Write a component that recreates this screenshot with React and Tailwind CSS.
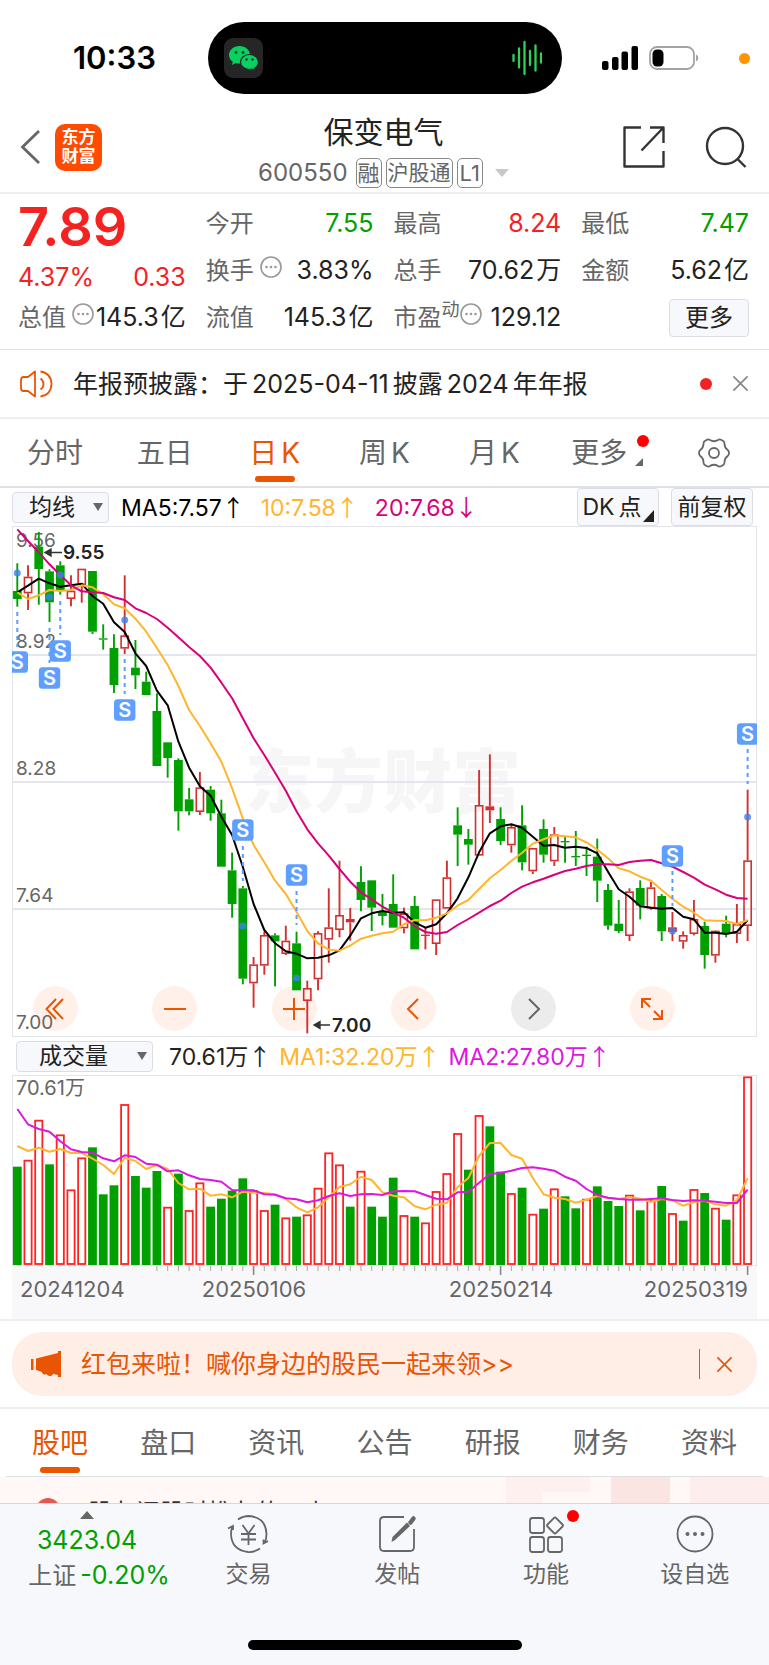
import React from "react";

const UP = "#d32f2f";
const DOWN = "#00a000";
const ORANGE = "#ea5504";

const STEP = 10.74;
const px = (i) => 5.3 + STEP * i;

// Readings are kept in thirds of a unit, grouped by the base that they start from.
const group = (base, rows) => rows.map((r) => (Array.isArray(r) ? [r[0], ...r.slice(1).map((v) => (v + base) / 3)] : (r + base) / 3));

// [direction, high, body top, body bottom, low]
const candles = [
  ...group(-18, [
    ["d", 130, 213, 237, 260], ["u", 136, 170, 220, 270], ["d", 36, 80, 147, 254], ["d", 148, 154, 247, 306],
    ["d", 124, 136, 210, 224], ["u", 166, 212, 237, 259], ["u", 146, 146, 195, 248], ["d", 153, 153, 335, 342],
    ["d", 313, 355, 359, 389], ["d", 343, 384, 495, 519], ["u", 166, 346, 386, 402], ["d", 360, 443, 466, 507],
    ["d", 455, 485, 525, 525], ["d", 520, 573, 738, 738], ["d", 667, 667, 714, 773],
  ]),
  ...group(522, [
    ["d", 175, 180, 334, 392], ["d", 264, 298, 334, 346], ["u", 216, 262, 336, 345], ["d", 258, 269, 340, 362],
    ["d", 299, 340, 500, 500], ["d", 458, 511, 612, 653], ["d", 558, 565, 836, 853], ["u", 771, 793, 850, 923],
    ["u", 695, 705, 797, 824], ["d", 700, 706, 724, 859], ["u", 677, 722, 762, 765], ["d", 695, 730, 871, 871],
    ["u", 842, 864, 903, 1000], ["u", 694, 699, 838, 871], ["u", 565, 682, 719, 788], ["u", 482, 645, 690, 712],
    ["u", 624, 657, 667, 722], ["d", 499, 546, 600, 634], ["d", 541, 541, 623, 693], ["d", 582, 633, 648, 676],
  ]),
  ...group(642, [
    ["d", 403, 492, 563, 563], ["u", 503, 520, 565, 580], ["d", 468, 498, 628, 628], ["u", 562, 584, 588, 628],
    ["u", 478, 478, 612, 645], ["u", 362, 412, 506, 506], ["d", 202, 256, 284, 378], ["d", 267, 297, 314, 374],
    ["u", 90, 195, 347, 347], ["u", 43, 199, 211, 249], ["d", 202, 237, 303, 315], ["u", 255, 261, 316, 338],
    ["d", 196, 256, 367, 391], ["u", 324, 324, 394, 402], ["d", 238, 267, 344, 368], ["u", 261, 283, 364, 378],
    ["d", 290, 303, 307, 368], ["d", 273, 348, 352, 378],
  ]),
  ...group(522, [
    ["d", 440, 464, 468, 528], ["d", 416, 470, 542, 606], ["d", 552, 570, 677, 689], ["d", 600, 671, 693, 699],
    ["u", 565, 574, 708, 723], ["d", 541, 564, 617, 658], ["u", 546, 562, 625, 629], ["d", 582, 588, 694, 723],
    ["u", 636, 682, 696, 723], ["u", 694, 705, 725, 746], ["u", 600, 657, 702, 706], ["d", 665, 678, 765, 806],
    ["u", 691, 692, 767, 788], ["d", 647, 671, 700, 712], ["u", 612, 672, 702, 729], ["u", 269, 481, 678, 723],
  ]),
];

const ma5 = [
  ...group(-18, [217, 197, 176, 190, 200, 196, 191, 228, 251, 307, 336, 400, 438, 512, 556]),
  ...group(522, [125, 203, 259, 287, 350, 405, 500, 612, 690, 730, 754, 761, 775, 773, 766, 751, 707, 655, 640, 633]),
  ...group(642, [518, 517, 547, 563, 553, 520, 475, 412, 337, 280, 259, 253, 263, 290, 317, 315, 323, 320]),
  ...group(522, [444, 460, 515, 568, 590, 619, 623, 626, 624, 650, 658, 698, 698, 702, 695, 661]),
];
const ma10 = [
  ...group(-18, [217, 237, 226, 210, 213, 210, 196, 202, 222, 253, 265, 296, 335, 384, 435, 498]),
  ...group(522, [30, 78, 130, 185, 265, 355, 435, 487, 542, 582, 635, 693, 730, 749, 752, 737, 716, 707, 700]),
  ...group(642, [575, 553, 540, 541, 533, 520, 497, 480, 447, 415, 390, 363, 338, 311, 298, 286, 289, 292]),
  ...group(522, [427, 449, 475, 505, 514, 530, 542, 570, 596, 620, 638, 661, 662, 663, 672, 661]),
];
const ma20 = [
  ...group(-18, [28, 63, 97, 133, 165, 196, 214, 217, 219, 232, 240, 265, 279, 297, 323, 352, 381, 408, 443, 488, 535]),
  ...group(522, [55, 115, 165, 218, 272, 334, 388, 430, 467, 507, 545, 577, 598, 620]),
  ...group(642, [518, 533, 559, 576, 581, 576, 555, 537, 518, 498, 482, 459, 440, 427, 416, 404, 393, 386]),
  ...group(522, [498, 493, 493, 495, 486, 482, 480, 490, 500, 516, 533, 554, 568, 584, 594, 596]),
];

// [candle index, marker box centre, dash start, dash end, dot]
const sells = [
  [0, 136, 86, 121, 47], [3, 152, 102, 137, 71], [4, 125, 75, 109, 49], [10, 184, 133, 168, 94],
  [21, 304, 320, 355, 400], [26, 349, 365, 399, 452], [61, 330, 345, 380, 405], [68, 208, 223, 258, 291],
];

const volumes = (
  "d620 u599 u479 d613 u523 u688 u592 d562 d703 d676 u432 d648 d683 d633 u740 d641 u750 u667 d740 d716 d692 d655 u690 " +
  "u750 d734 u772 d770 u763 u683 u577 u613 d740 u632 d740 d770 d653 u765 d770 u787 u693 u639 u519 d629 u465 d499 d635 " +
  "u699 d683 u761 d746 u685 d709 d745 u716 d679 d723 d738 u704 d751 u720 d678 u759 d782 u687 d699 u743 d779 u703 u349"
).split(" ").map((s) => [s[0], (Number(s.slice(1)) - 345) / 3]);

const volMa1 = group(-345, [
  558, 573, 563, 575, 567, 579, 579, 596, 615, 642, 593, 603, 627, 615, 627, 669, 688, 686, 707, 703, 712, 695, 698, 699, 703,
  717, 742, 757, 742, 712, 681, 673, 650, 660, 697, 707, 712, 739, 748, 734, 729, 681, 654, 588, 549, 549, 585, 596, 654, 703,
  713, 717, 728, 719, 708, 714, 717, 711, 716, 725, 717, 721, 737, 726, 722, 733, 737, 721, 655,
]);
const volMa2 = group(-345, [
  447, 493, 507, 515, 544, 568, 576, 578, 595, 604, 586, 591, 611, 614, 634, 631, 646, 657, 660, 665, 690, 691, 691, 703, 704,
  715, 718, 727, 721, 708, 700, 708, 703, 702, 705, 694, 693, 694, 705, 716, 718, 697, 695, 668, 642, 639, 632, 624, 622, 626,
  632, 650, 662, 687, 705, 713, 717, 719, 719, 717, 715, 720, 723, 721, 722, 725, 729, 729, 689,
]);

function Line({ values, color }) {
  return (
    <polyline
      points={values.map((v, i) => `${px(i).toFixed(1)},${v.toFixed(1)}`).join(" ")}
      fill="none" stroke={color} strokeWidth="2" strokeLinejoin="round"
    />
  );
}

function Candle({ i, c }) {
  const [dir, high, top, bottom, low] = c;
  const x = px(i);
  const color = dir === "u" ? UP : DOWN;
  const thin = bottom - top < 5;
  const hollow = dir === "u" && !thin;
  return (
    <g stroke={color} strokeWidth="1.9">
      <line x1={x} x2={x} y1={high} y2={top} />
      <line x1={x} x2={x} y1={bottom} y2={low} />
      {hollow ? (
        <rect x={x - 3.6} y={top + 0.8} width="7.2" height={bottom - top - 1.6} fill="none" strokeWidth="1.6" />
      ) : (
        <rect x={x - 4.4} y={top} width="8.8" height={bottom - top} fill={color} stroke="none" />
      )}
    </g>
  );
}

function PriceChart() {
  return (
    <svg viewBox="0 0 745 511" className="pointer-events-none relative block h-auto w-full" role="img" aria-label="日K">
      <rect x="0.5" y="0.5" width="744" height="510" fill="none" stroke="#e3e4ea" />
      <text x="371" y="281" textAnchor="middle" fontSize="69" fontWeight="900" fill="#f6f6f7">东方财富</text>
      {[129, 256, 383].map((y) => (
        <line key={y} x1="0" x2="745" y1={y} y2={y} stroke="#e4e6ee" strokeWidth="1.8" />
      ))}
      <g fontSize="19" fill="#666">
        <text x="4" y="21">9.56</text>
        <text x="4" y="122">8.92</text>
        <text x="4" y="249">8.28</text>
        <text x="4" y="376">7.64</text>
        <text x="4" y="503">7.00</text>
      </g>
      {candles.map((c, i) => <Candle key={i} i={i} c={c} />)}
      <Line values={ma5} color="#000" />
      <Line values={ma10} color="#ffb52e" />
      <Line values={ma20} color="#d9007c" />
      {sells.map(([i, box, d1, d2, dot]) => (
        <g key={i}>
          <circle cx={px(i)} cy={dot} r="3.5" fill="#3c82f0" fillOpacity="0.8" />
          <line x1={px(i)} x2={px(i)} y1={d1} y2={d2} stroke="#5a9dfa" strokeWidth="2" strokeDasharray="4 4" />
          <rect x={px(i) - 10.7} y={box - 10.7} width="21.4" height="21.4" rx="3.5" fill="#5f9fff" />
          <text x={px(i)} y={box + 7} textAnchor="middle" fontSize="20" fontWeight="600" fill="#fff">S</text>
        </g>
      ))}
      <g stroke="#333" strokeWidth="1.4" fill="#333">
        <path d="M33 26.5H50M39 23l-6 3.5 6 3.5z" />
        <path d="M302 499H318M308 495.500l-6 3.500 6 3.500z" />
      </g>
      <g fontSize="19" fontWeight="600" fill="#222">
        <text x="51" y="33">9.55</text>
        <text x="320" y="506">7.00</text>
      </g>
    </svg>
  );
}

function VolumeChart() {
  return (
    <svg viewBox="0 0 745 244" className="block h-auto w-full" role="img" aria-label="成交量">
      <rect x="0" y="190" width="745" height="54" fill="#f8f8fb" />
      <rect x="0.5" y="0.5" width="744" height="190" fill="#fff" stroke="#e3e4ea" />
      <text x="4" y="20" fontSize="20" fill="#666">70.61万</text>
      {volumes.map(([dir, top], i) =>
        dir === "u" ? (
          <rect key={i} x={px(i) - 3.6} y={top + 1} width="7.2" height={188 - top} fill="#fff" stroke="#f22" strokeWidth="1.8" />
        ) : (
          <rect key={i} x={px(i) - 4.4} y={top} width="8.8" height={190 - top} fill={DOWN} />
        )
      )}
      <Line values={volMa1} color="#ffb52e" />
      <Line values={volMa2} color="#dd17e0" />
      {volumes.map((_, i) => {
        const major = i === 22 || i === 45 || i === 68;
        return i > 12 ? (
          <line key={i} x1={px(i)} x2={px(i)} y1="191" y2={major ? 200 : 196} stroke={major ? "#888" : "#aaa"} strokeWidth={major ? 1.6 : 1} />
        ) : null;
      })}
      <g fontSize="22" fill="#666">
        <text x="8" y="222">20241204</text>
        <text x="242" y="222" textAnchor="middle">20250106</text>
        <text x="489" y="222" textAnchor="middle">20250214</text>
        <text x="736" y="222" textAnchor="end">20250319</text>
      </g>
    </svg>
  );
}

function Dots() {
  return (
    <svg viewBox="0 0 22 22" className="size-[22px] shrink-0" fill="none" stroke="#999" strokeWidth="1.6">
      <circle cx="11" cy="11" r="10" />
      <g fill="#999" stroke="none">
        <circle cx="6.500" cy="11" r="1.300" /><circle cx="11" cy="11" r="1.300" /><circle cx="15.500" cy="11" r="1.300" />
      </g>
    </svg>
  );
}

function Stat({ label, sup, info, value, unit, tone = "text-[#222]" }) {
  return (
    <div className="flex items-center justify-between whitespace-nowrap">
      <span className="flex items-center text-2xl text-[#666]">
        {label}
        {sup && <span className="-mt-4 text-lg">{sup}</span>}
        {info && <span className={sup ? "-mt-2" : "-mt-2 ml-1.5"}><Dots /></span>}
      </span>
      <span className={`text-[25px] ${tone}`}>{value}{unit && <span className="ml-0.5">{unit}</span>}</span>
    </div>
  );
}

function Arrow({ children }) {
  return <span className="font-['Noto_Sans_CJK_SC']">{children}</span>;
}

function Cross({ className }) {
  return (
    <svg viewBox="0 0 18 18" className={className} fill="none" stroke="currentColor" strokeWidth="1.8">
      <path d="M1.500 1.500l15 15M16.500 1.500l-15 15" />
    </svg>
  );
}

function Picker({ label, className, inset }) {
  return (
    <label className={`relative block ${className}`}>
      <select aria-label={label} className={`h-full w-full appearance-none rounded border border-[#dcdde4] bg-[#f7f8fb] text-[23px] leading-7 text-[#222] ${inset}`}>
        <option>{label}</option>
      </select>
      <svg viewBox="0 0 10 8" className="pointer-events-none absolute right-1.5 top-[11px] h-2 w-2.5" fill="#666"><path d="M0 0h10L5 8z" /></svg>
    </label>
  );
}

const tools = [
  { name: "快退", d: "M16 6L6.500 16 16 26M23 6L13.500 16 23 26" },
  { name: "缩小", d: "M5 16h22" },
  { name: "放大", d: "M5 16h22M16 5v22" },
  { name: "向左", d: "M20 6L10 16l10 10" },
  { name: "向右", d: "M12 6l10 10-10 10", gray: true },
  { name: "全屏", d: "M6 15V6h9M6 6l8 8M26 17v9h-9M26 26l-8-8" },
];

const periods = [
  { text: "分时" }, { text: "五日" }, { text: "日", suffix: "K", active: true },
  { text: "周", suffix: "K" }, { text: "月", suffix: "K" }, { text: "更多", more: true },
];

function NavItem({ label, badge, children }) {
  return (
    <a href="#" className="flex flex-col items-center pt-[3px]">
      <span className="relative">
        <svg viewBox="0 0 42 40" className="h-10 w-[42px]" fill="none" stroke="#666" strokeWidth="1.8">{children}</svg>
        {badge && <span className="absolute -right-3 -top-1 size-3 rounded-full bg-[#f00]" />}
      </span>
      <span className="mt-1 text-[23px] leading-8 text-[#666]">{label}</span>
    </a>
  );
}

export default function App() {
  return (
    <div className="w-full overflow-hidden bg-white font-[Inter,'Noto_Sans_CJK_SC',sans-serif] text-[#222]">
      <div className="grid grid-cols-[1fr_354px_1fr] items-center pt-[22px]">
        <div className="pl-[73px] text-[31px] font-semibold leading-9 text-black">10:33</div>
        <div className="flex h-[72px] items-center justify-between rounded-full bg-black pl-4 pr-5">
          <svg viewBox="0 0 39 40" className="h-10 w-[39px]">
            <rect width="39" height="40" rx="9" fill="#262626" />
            <path d="M15.500 8C9.500 8 5 12 5 17c0 3 1.500 5.200 3.800 6.800L8 27l3.800-2c1.200.400 2.400.600 3.700.600C21.500 25.600 26 22 26 17s-4.500-9-10.500-9z" fill="#07d160" />
            <path d="M25.500 16.500c-5 0-9 3.300-9 7.500s4 7.500 9 7.500c1 0 2-.100 2.900-.400l3 1.700-.700-2.700C33 28.600 34.500 26.500 34.500 24c0-4.200-4-7.500-9-7.500z" fill="#07d160" stroke="#262626" strokeWidth="1.200" />
            <g fill="#1d3b2a">
              <circle cx="12" cy="14.500" r="1.400" /><circle cx="19" cy="14.500" r="1.400" />
              <circle cx="22.500" cy="21.500" r="1.200" /><circle cx="28.500" cy="21.500" r="1.200" />
            </g>
          </svg>
          <svg viewBox="0 0 30 36" className="h-9 w-[30px]" stroke="#30d158" strokeWidth="2.300" strokeLinecap="round">
            <path d="M1.500 15v6M7 8.500v19M12.500 2v32M18 11v14M23.500 5.500v25M29 13.500v9" />
          </svg>
        </div>
        <div className="flex items-center pl-10">
          <svg viewBox="0 0 36 24" className="h-6 w-9"><rect y="15" width="6.500" height="9" rx="2" /><rect x="10" y="11" width="6.500" height="13" rx="2" /><rect x="19.500" y="5.500" width="6.500" height="18.500" rx="2" /><rect x="29.500" y="0" width="6.500" height="24" rx="2" /></svg>
          <svg viewBox="0 0 50 24" className="ml-[11px] h-6 w-[50px]"><rect x="1" y="1" width="44" height="22" rx="7" fill="none" stroke="#a3a3a3" strokeWidth="1.800" /><rect x="3.500" y="3.500" width="11" height="17" rx="4.500" /><path d="M47 8.500c3 1.500 3 5.500 0 7z" fill="#a3a3a3" /></svg>
          <span className="ml-10 size-[11px] rounded-full bg-[#ff9500]" />
        </div>
      </div>

      <header className="grid grid-cols-[1fr_auto_1fr] border-b-2 border-[#eeeeef] pb-1 pl-5 pr-[22px] pt-[18px]">
        <div className="flex items-center pb-1.5">
          <button aria-label="返回">
            <svg viewBox="0 0 20 34" className="h-[34px] w-5" fill="none" stroke="#666" strokeWidth="2.800"><path d="M19 1L2.500 17 19 33" /></svg>
          </button>
          <div className="ml-[15px] flex h-[47px] w-[47px] flex-col items-center justify-center rounded-[10px] bg-[#ff4a00] text-[17px] font-bold leading-[19px] text-white">
            <span>东方</span><span>财富</span>
          </div>
        </div>
        <div className="flex flex-col items-center">
          <h1 className="text-[30px] leading-10">保变电气</h1>
          <div className="mt-1.5 flex items-center gap-1 text-[22px] leading-7 text-[#666]">
            <span className="mr-1 text-2xl leading-7">600550</span>
            <span className="rounded-[5px] border border-[#888] px-px">融</span>
            <span className="rounded-[5px] border border-[#888] px-px text-[21px]">沪股通</span>
            <span className="rounded-[5px] border border-[#888] px-0.5">L1</span>
            <svg viewBox="0 0 14 8" className="ml-2 h-2 w-3.5" fill="#c8c8c8"><path d="M0 0h14L7 8z" /></svg>
          </div>
        </div>
        <div className="flex items-center justify-end gap-10 pb-1.5">
          <button aria-label="分享">
            <svg viewBox="0 0 42 42" className="size-[42px]" fill="none" stroke="#333" strokeWidth="2.400" strokeLinejoin="round"><path d="M18 1.500H1.500v39h39V25M27 1.500h13.500V17M40.500 1.500L18.500 24.500" /></svg>
          </button>
          <button aria-label="搜索">
            <svg viewBox="0 0 42 42" className="size-[42px]" fill="none" stroke="#333" strokeWidth="2.400"><circle cx="20" cy="20" r="18" /><path d="M32.500 33l8 8" /></svg>
          </button>
        </div>
      </header>

      <section className="grid grid-cols-4 grid-rows-[repeat(3,47px)] gap-x-5 border-b border-[#dfe0e5] pb-2 pl-[18px] pr-5 pt-1.5">
        <div className="row-span-2 text-[#f52222]">
          <div className="text-[54px] font-semibold leading-[54px]">7.89</div>
          <div className="mt-2 flex justify-between text-[25px] leading-[30px]"><span>4.37%</span><span>0.33</span></div>
        </div>
        <Stat label="今开" value="7.55" tone="text-[#00a000]" />
        <Stat label="最高" value="8.24" tone="text-[#f52222]" />
        <Stat label="最低" value="7.47" tone="text-[#00a000]" />
        <Stat label="换手" info value="3.83%" />
        <Stat label="总手" value="70.62" unit="万" />
        <Stat label="金额" value="5.62" unit="亿" />
        <Stat label="总值" info value="145.3" unit="亿" />
        <Stat label="流值" value="145.3" unit="亿" />
        <Stat label="市盈" sup="动" info value="129.12" />
        <div className="flex items-center justify-end">
          <button className="h-[38px] w-20 rounded border border-[#dcdde4] bg-[#f7f8fb] text-2xl leading-8">更多</button>
        </div>
      </section>

      <div className="flex h-[69px] items-center border-b-2 border-[#efeff1] px-5">
        <svg viewBox="0 0 33 28" className="h-7 w-[33px]" fill="none" stroke={ORANGE} strokeWidth="1.800" strokeLinejoin="round"><path d="M15 1.500L8 7H3.500Q1 7 1 10v8q0 3 2.500 3H8l7 5.500zM20.500 8.500q3 2 3 5.500t-3 5.500M20.500 1.500q10.500 1.500 11 12.500-.500 11-11 12.500" /></svg>
        <p className="ml-5 flex-1 whitespace-nowrap text-[25px] leading-9 text-[#222]">
          年报预披露：于<span className="mx-1">2025-04-11</span>披露<span className="mx-1">2024</span>年年报
        </p>
        <span className="size-3 rounded-full bg-[#f52222]" />
        <button aria-label="关闭" className="ml-5 text-[#888]"><Cross className="size-[17px]" /></button>
      </div>

      <nav className="grid h-[69px] grid-cols-7 border-b-2 border-[#e0e1e7] text-[28px] text-[#666]">
        {periods.map((t) => (
          <button key={t.text} className={`relative flex items-center justify-center whitespace-nowrap ${t.active ? "text-[#ea5504]" : ""} ${t.more ? "pr-2.5" : ""}`}>
            {t.text}
            {t.suffix && <span className="ml-1">{t.suffix}</span>}
            {t.active && <span className="absolute bottom-1 left-1/2 h-1.5 w-10 -translate-x-1/2 rounded-full bg-[#ea5504]" />}
            {t.more && (
              <>
                <span className="absolute right-2.5 top-4 size-3 rounded-full bg-[#f00]" />
                <svg viewBox="0 0 8 8" className="absolute bottom-5 right-4 size-2" fill="#666"><path d="M8 0v8H0z" /></svg>
              </>
            )}
          </button>
        ))}
        <button aria-label="设置" className="flex items-center justify-center">
          <svg viewBox="0 0 32 30" className="h-[30px] w-8" fill="none" stroke="#666" strokeWidth="1.800" strokeLinejoin="round">
            <path d="M9 1.800Q10.500 1 12 2q4 2.500 8 0 1.500-1 3-.200l2.500 1.500Q26.500 4 26.500 6q.200 4 3.200 6 1.300 1 1.300 3t-1.300 3q-3 2-3.200 6 0 2-1 2.700L23 28.200q-1.500.800-3-.200-4-2.500-8 0-1.500 1-3 .200l-2.500-1.500q-1-.700-1-2.700-.200-4-3.200-6Q1 17 1 15t1.300-3q3-2 3.200-6 0-2 1-2.700z" />
            <circle cx="16" cy="15" r="5" />
          </svg>
        </button>
      </nav>

      <main className="px-3">
        <div className="flex h-[38px] items-center whitespace-nowrap text-[23px] leading-7">
          <Picker label="均线" className="h-[31px] w-[97px]" inset="pl-4" />
          <span className="ml-3 text-black">MA5:7.57<Arrow>↑</Arrow></span>
          <span className="ml-4 text-[#ffb52e]">10:7.58<Arrow>↑</Arrow></span>
          <span className="ml-4 text-[#d9007c]">20:7.68<Arrow>↓</Arrow></span>
          <button className="relative ml-auto h-[38px] w-[82px] rounded border border-[#dcdde4] bg-[#f7f8fb] pr-3">
            DK<span className="ml-1">点</span>
            <svg viewBox="0 0 11 12" className="absolute bottom-[3px] right-1 h-3 w-[11px]" fill="#222"><path d="M11 0v12H0z" /></svg>
          </button>
          <button className="ml-3 mr-1 h-[38px] w-[82px] rounded border border-[#dcdde4] bg-[#f7f8fb]">前复权</button>
        </div>

        <div className="relative">
          <div className="absolute bottom-[6px] left-0 right-0 flex justify-between pl-[21px] pr-[82px]">
            {tools.map((t) => (
              <button key={t.name} aria-label={t.name} className={`flex size-[45px] items-center justify-center rounded-full ${t.gray ? "bg-[#ececec] text-[#666]" : "bg-[#fff1ea] text-[#ea5504]"}`}>
                <svg viewBox="0 0 32 32" className="size-8" fill="none" stroke="currentColor" strokeWidth="2">
                  <path d={t.d} />
                </svg>
              </button>
            ))}
          </div>
          <PriceChart />
        </div>

        <div className="flex h-[38px] items-center whitespace-nowrap pl-1 text-[23px] leading-7">
          <Picker label="成交量" className="h-[31px] w-[137px]" inset="pl-[22px]" />
          <span className="ml-4">70.61万<Arrow>↑</Arrow></span>
          <span className="ml-2 text-[#ffb52e]">MA1:32.20万<Arrow>↑</Arrow></span>
          <span className="ml-2 text-[#dd17e0]">MA2:27.80万<Arrow>↑</Arrow></span>
        </div>
        <VolumeChart />
      </main>

      <div className="border-y-2 border-[#eeeff2] px-3 py-[11px]">
        <div className="flex h-16 items-center rounded-[30px] bg-[#feeee6] pl-[19px] pr-6 text-[#ea5504]">
          <svg viewBox="0 0 30 26" className="h-[26px] w-[30px]" fill="currentColor"><path d="M0 8h2.500v11H0zM5 7.500L27 2V0h3v26h-3v-2l-5-1.300c-.500 3-5.500 3-6.500.300-2 1.500-4.500 0-4.500-2L5 19z" /></svg>
          <a href="#" className="ml-5 flex-1 whitespace-nowrap text-[25px] leading-9">红包来啦！喊你身边的股民一起来领&gt;&gt;</a>
          <span className="h-[30px] w-px bg-[#ea5504]" />
          <button aria-label="关闭" className="ml-4"><Cross className="size-[17px]" /></button>
        </div>
      </div>

      <nav className="mx-1.5 grid h-[68px] grid-cols-7 border-b border-[#dfe0e5] text-[28px] text-[#666]">
        {["股吧", "盘口", "资讯", "公告", "研报", "财务", "资料"].map((t) => (
          <button key={t} className={`relative flex items-center justify-center ${t === "股吧" ? "text-[#ea5504]" : ""}`}>
            {t}
            {t === "股吧" && <span className="absolute bottom-[3px] left-1/2 h-1.5 w-10 -translate-x-1/2 rounded-full bg-[#ea5504]" />}
          </button>
        ))}
      </nav>

      <div className="flex h-[26px] items-start overflow-hidden bg-[#fff8f6] pl-9">
        <span className="mt-[21px] size-6 shrink-0 rounded-full bg-[#e05a50]" />
        <span className="ml-7 mt-5 flex-1 whitespace-nowrap text-2xl text-[#333]">股友问股时推友的一点</span>
        <svg viewBox="0 0 263 26" className="h-[26px] w-[263px]"><path d="M0 0h84v15H36v11H0z" fill="#fdf0ef" /><path d="M105 0h59v26h-59z" fill="#fbe5e3" /><path d="M184 0h79v26h-79z" fill="#fdeeed" /></svg>
      </div>

      <footer className="border-t border-[#d5d8e0] bg-[#f7f8fb] pb-4">
        <div className="grid grid-cols-[174px_1fr_1fr_1fr_1fr] pt-[7px]">
          <a href="#" className="flex flex-col items-center whitespace-nowrap text-[25px] leading-[35px] text-[#00a000]">
            <svg viewBox="0 0 14 8" className="h-2 w-3.5" fill="#666"><path d="M0 8h14L7 0z" /></svg>
            <span className="mt-1">3423.04</span>
            <span className="pl-6"><span className="mr-1 text-2xl text-[#666]">上证</span>-0.20%</span>
          </a>
          <NavItem label="交易">
            <path d="M11 5.500Q16 2 22 2q17 1.500 17.500 18 0 5-2 9.500M41 27l-4.500 2.500v-4M33 34.500Q27 38.500 21 38 4.500 36 4 20q0-4 1.500-8M1 14.500l5-2.500v4" />
            <path d="M15.500 11l6 8.500 6-8.500M14 20h15M14 25.500h15M21.500 19.500V31" />
          </NavItem>
          <NavItem label="发帖">
            <path d="M28 3H8Q4 3 4 7v26q0 4 4 4h26q4 0 4-4V15" />
            <path d="M34.500 8.500l3-4" strokeWidth="4.500" strokeLinecap="round" />
            <path d="M15.500 28L16.500 23 31 8.500l3 3.500L19 26z" fill="#666" stroke="none" />
          </NavItem>
          <NavItem label="功能" badge>
            <rect x="5" y="4" width="14" height="15" rx="2.500" /><rect x="5" y="23" width="14" height="15" rx="2.500" /><rect x="23" y="23" width="14" height="15" rx="2.500" />
            <path d="M28.800 4.200q1.200-1.400 2.400 0l6.300 6.300q1 1 0 2l-6.300 6.300q-1.200 1.400-2.400 0l-6.300-6.300q-1-1 0-2z" />
          </NavItem>
          <NavItem label="设自选">
            <circle cx="21" cy="20" r="17.500" />
            <g fill="#666" stroke="none"><circle cx="13.500" cy="20" r="2" /><circle cx="21" cy="20" r="2" /><circle cx="28.500" cy="20" r="2" /></g>
          </NavItem>
        </div>
        <div className="mx-auto mt-[47px] h-2.5 w-[274px] rounded-full bg-black" />
      </footer>
    </div>
  );
}
